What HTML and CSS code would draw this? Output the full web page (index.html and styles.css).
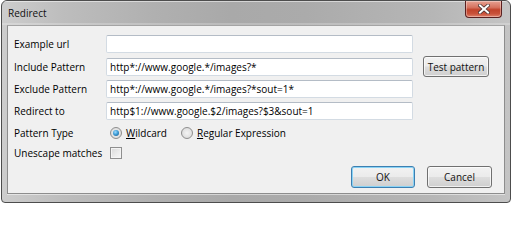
FILE: index.html
```html
<!DOCTYPE html>
<html>
<head>
<meta charset="utf-8">
<link rel="stylesheet" href="styles.css">
</head>
<body>
<div class="window">
  <div class="titlebar">
    <span class="title">Redirect</span>
    <div class="close">
      <svg width="12" height="10" viewBox="0 0 12 10">
        <path d="M2 1.5 L10 8.5 M10 1.5 L2 8.5" stroke="#4a3434" stroke-width="3.6" stroke-linecap="square" fill="none"/>
        <path d="M2 1.5 L10 8.5 M10 1.5 L2 8.5" stroke="#ffffff" stroke-width="2" stroke-linecap="square" fill="none"/>
      </svg>
    </div>
  </div>
  <div class="client">
    <div class="form">
      <div class="row r1">
        <span class="label">Example url</span>
        <div class="field"></div>
      </div>
      <div class="row r2">
        <span class="label">Include Pattern</span>
        <div class="field">http*://www.google.*/images?*</div>
        <button class="btn test">Test pattern</button>
      </div>
      <div class="row r3">
        <span class="label">Exclude Pattern</span>
        <div class="field">http*://www.google.*/images?*sout=1*</div>
      </div>
      <div class="row r4">
        <span class="label">Redirect to</span>
        <div class="field">http$1://www.google.$2/images?$3&amp;sout=1</div>
      </div>
      <div class="row r5">
        <span class="label">Pattern Type</span>
        <div class="options">
          <span class="radio checked"></span><span class="opt"><u>W</u>ildcard</span>
          <span class="radio second"></span><span class="opt"><u>R</u>egular Expression</span>
        </div>
      </div>
      <div class="row r6">
        <span class="label">Unescape matches</span>
        <span class="check"></span>
      </div>
    </div>
    <div class="actions">
      <button class="btn ok">OK</button>
      <button class="btn cancel">Cancel</button>
    </div>
  </div>
</div>
</body>
</html>
```
FILE: styles.css
```css
html, body {
  margin: 0;
  padding: 0;
  background: #ffffff;
  width: 512px;
  height: 206px;
  overflow: hidden;
}
body {
  font-family: "Open Sans", "Noto Sans", sans-serif;
  font-size: 10px;
  color: #000;
}
.window {
  box-sizing: border-box;
  margin-left: 1px;
  width: 510px;
  height: 203px;
  border: 1px solid #4d4d4d;
  border-radius: 6px 6px 4px 4px;
  background: linear-gradient(to right, #cdcdcd 0%, #bdbdbd 12%, #b0b0b0 30%, #a9a9a9 45%, #ababab 60%, #b6b6b6 85%, #c4c4c4 100%);
  display: flex;
  flex-direction: column;
  overflow: hidden;
}
.titlebar {
  height: 24px;
  display: flex;
  justify-content: space-between;
  align-items: flex-start;
  padding-left: 6px;
  padding-right: 8px;
  box-shadow: inset 0 1px 0 rgba(255,255,255,0.5), inset 0 -2px 0 rgba(255,255,255,0.22);
}
.title {
  font-size: 10px;
  line-height: 24px;
  color: #111;
}
.close {
  width: 37px;
  height: 17px;
  box-sizing: border-box;
  border: 1px solid #5a2020;
  border-top: none;
  border-radius: 0 0 4px 4px;
  background: linear-gradient(to bottom, #e6a192 0%, #d6735f 40%, #c1432b 55%, #c9523a 80%, #e0826c 100%);
  display: flex;
  align-items: center;
  justify-content: center;
  box-shadow: inset 0 0 0 1px rgba(255,255,255,0.35);
}
.close svg { display: block; }
.client {
  flex: 1;
  margin: 0 5px 8px 5px;
  box-sizing: border-box;
  border: 1px solid #8d8d8d;
  border-top-color: #a4a4a4;
  background: #f0f0f0;
  padding: 6px 14px 0 6px;
  box-shadow: 0 1px 0 rgba(255,255,255,0.5);
}
.form {
  display: flex;
  flex-direction: column;
}
.row {
  display: flex;
  align-items: center;
}
.r1 { height: 23px; }
.r2 { height: 23px; }
.r3 { height: 22px; }
.r4 { height: 22px; }
.r5 { height: 21px; }
.r6 { height: 20px; }
.label {
  width: 92px;
  flex: none;
  white-space: nowrap;
}
.field {
  box-sizing: border-box;
  width: 307px;
  height: 18px;
  flex: none;
  background: #ffffff;
  border: 1px solid #d3dbe3;
  border-top-color: #b4bcc6;
  border-radius: 2px;
  padding-left: 3px;
  line-height: 16px;
  white-space: nowrap;
  overflow: hidden;
  color: #000;
}
.btn {
  font-family: "Open Sans", "Noto Sans", sans-serif;
  font-size: 10px;
  color: #111;
  box-sizing: border-box;
  border: 1px solid #707070;
  border-radius: 3px;
  background: linear-gradient(to bottom, #f2f2f2 0%, #ebebeb 48%, #dddddd 52%, #cfcfcf 100%);
  box-shadow: inset 0 0 0 1px rgba(255,255,255,0.7);
  padding: 0;
  margin: 0;
}
.test {
  margin-left: 10px;
  width: 66px;
  height: 21px;
}
.options {
  display: flex;
  align-items: center;
  padding-left: 4px;
}
.radio {
  box-sizing: border-box;
  width: 12px;
  height: 12px;
  border-radius: 50%;
  border: 1px solid #8f8f8f;
  background: radial-gradient(circle at 50% 50%, #f4f4f4 0%, #e2e2e2 60%, #d0d0d0 100%);
  display: flex;
  align-items: center;
  justify-content: center;
  flex: none;
}
.radio.checked::after {
  content: "";
  width: 6px;
  height: 6px;
  border-radius: 50%;
  background: radial-gradient(circle at 40% 35%, #9fdcff 0%, #3f9ed8 45%, #17507f 100%);
}
.radio.second {
  margin-left: 14px;
}
.opt {
  margin-left: 4px;
}
.check {
  box-sizing: border-box;
  width: 12px;
  height: 12px;
  margin-left: 4px;
  border: 1px solid #8f8f8f;
  background: linear-gradient(135deg, #d9d9d9 0%, #ececec 60%, #f6f6f6 100%);
  box-shadow: inset 0 0 0 1px #f4f4f4;
}
.actions {
  display: flex;
  justify-content: flex-end;
  gap: 12px;
  margin-top: 3px;
  margin-right: -2px;
}
.ok {
  width: 64px;
  height: 22px;
  border-color: #3c7fb1;
  box-shadow: inset 0 0 0 1px #8ad3f5;
}
.cancel {
  width: 65px;
  height: 22px;
}
```
